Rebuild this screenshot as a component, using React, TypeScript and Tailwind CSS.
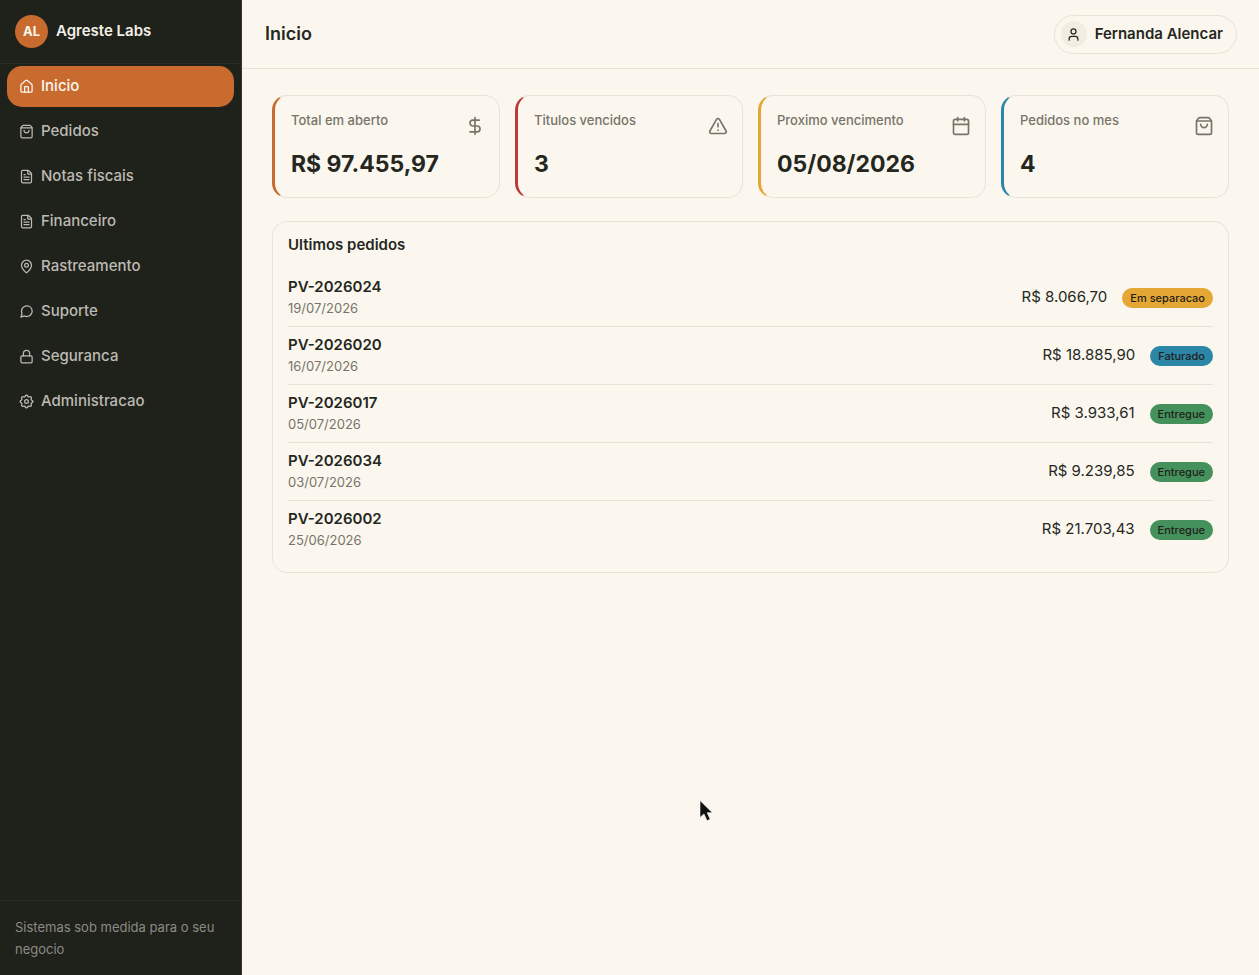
import type { ComponentType } from "react";
import {
  Calendar,
  DollarSign,
  FileText,
  House,
  Lock,
  MapPin,
  ShoppingBag,
  TriangleAlert,
  User,
} from "lucide-react";

type IconProps = { className?: string };
type NavItem = { label: string; icon: ComponentType<IconProps> };

function ChatIcon({ className }: IconProps) {
  return (
    <svg
      className={className}
      viewBox="0 0 24 24"
      fill="none"
      stroke="currentColor"
      strokeWidth="2"
      strokeLinecap="round"
      strokeLinejoin="round"
      aria-hidden="true"
    >
      <path d="M21 11.5a8.4 8.4 0 0 1-.9 3.8 8.5 8.5 0 0 1-7.6 4.7 8.4 8.4 0 0 1-3.8-.9L3 21l1.9-5.7a8.4 8.4 0 0 1-.9-3.8 8.5 8.5 0 0 1 4.7-7.6 8.4 8.4 0 0 1 3.8-.9h.5a8.5 8.5 0 0 1 8 8v.5z" />
    </svg>
  );
}

function GearIcon({ className }: IconProps) {
  return (
    <svg
      className={className}
      viewBox="1.5 1.5 21 21"
      fill="none"
      stroke="currentColor"
      strokeWidth="1.8"
      strokeLinecap="round"
      strokeLinejoin="round"
      aria-hidden="true"
    >
      <path d="M10.325 4.317c.426-1.756 2.924-1.756 3.35 0a1.724 1.724 0 0 0 2.573 1.066c1.543-.94 3.31.826 2.37 2.37a1.724 1.724 0 0 0 1.065 2.572c1.756.426 1.756 2.924 0 3.35a1.724 1.724 0 0 0-1.066 2.573c.94 1.543-.826 3.31-2.37 2.37a1.724 1.724 0 0 0-2.572 1.065c-.426 1.756-2.924 1.756-3.35 0a1.724 1.724 0 0 0-2.573-1.066c-1.543.94-3.31-.826-2.37-2.37a1.724 1.724 0 0 0-1.065-2.572c-1.756-.426-1.756-2.924 0-3.35a1.724 1.724 0 0 0 1.066-2.573c-.94-1.543.826-3.31 2.37-2.37 1 .608 2.296.07 2.572-1.065z" />
      <circle cx="12" cy="12" r="2.6" />
    </svg>
  );
}

const navItems: NavItem[] = [
  { label: "Inicio", icon: House },
  { label: "Pedidos", icon: ShoppingBag },
  { label: "Notas fiscais", icon: FileText },
  { label: "Financeiro", icon: FileText },
  { label: "Rastreamento", icon: MapPin },
  { label: "Suporte", icon: ChatIcon },
  { label: "Seguranca", icon: Lock },
  { label: "Administracao", icon: GearIcon },
];

const stats = [
  { label: "Total em aberto", value: "R$ 97.455,97", icon: DollarSign, accent: "border-l-[#c96a2e]" },
  { label: "Titulos vencidos", value: "3", icon: TriangleAlert, accent: "border-l-[#b93a3a]" },
  { label: "Proximo vencimento", value: "05/08/2026", icon: Calendar, accent: "border-l-[#e5a733]" },
  { label: "Pedidos no mes", value: "4", icon: ShoppingBag, accent: "border-l-[#2b86a8]" },
];

const statusColors: Record<string, string> = {
  "Em separacao": "bg-[#e5a733]",
  Faturado: "bg-[#2b86a8]",
  Entregue: "bg-[#45915b]",
};

const orders = [
  { id: "PV-2026024", date: "19/07/2026", total: "R$ 8.066,70", status: "Em separacao" },
  { id: "PV-2026020", date: "16/07/2026", total: "R$ 18.885,90", status: "Faturado" },
  { id: "PV-2026017", date: "05/07/2026", total: "R$ 3.933,61", status: "Entregue" },
  { id: "PV-2026034", date: "03/07/2026", total: "R$ 9.239,85", status: "Entregue" },
  { id: "PV-2026002", date: "25/06/2026", total: "R$ 21.703,43", status: "Entregue" },
];

function Sidebar() {
  return (
    <aside className="flex w-[242px] shrink-0 flex-col border-r border-[#37352d] bg-[#1f211b]">
      <div className="flex h-16 items-center gap-2 border-b border-[#2a2c26] px-[15px]">
        <span className="flex size-[33px] items-center justify-center rounded-full bg-[#c96a2e] text-[13px] font-bold text-[#faf6ee]">
          AL
        </span>
        <span className="text-[15px] font-semibold text-[#f3efe6]">Agreste Labs</span>
      </div>

      <nav className="flex flex-1 flex-col gap-1 px-[7px] pt-0.5">
        {navItems.map(({ label, icon: Icon }, i) => (
          <a
            key={label}
            href="#"
            aria-current={i === 0 ? "page" : undefined}
            className={
              i === 0
                ? "flex h-[41px] items-center gap-[7px] rounded-[15px] bg-[#c96a2e] px-3 text-[15px] font-medium text-[#faf6ee]"
                : "flex h-[41px] items-center gap-[7px] rounded-[15px] px-3 text-[15px] font-medium text-[#bcbab2]"
            }
          >
            <Icon className="size-[15px]" />
            {label}
          </a>
        ))}
      </nav>

      <p className="border-t border-[#2a2c26] p-[15px] text-[13px] leading-[22px] text-[#8c8b84]">
        Sistemas sob medida para o seu negocio
      </p>
    </aside>
  );
}

function Header() {
  return (
    <header className="flex h-[69px] items-center justify-between border-b border-[#e8e3d6] pr-[22px] pl-[23px]">
      <h1 className="text-lg font-semibold">Inicio</h1>
      <button
        type="button"
        className="flex h-[39px] items-center gap-2 rounded-full border border-[#e8e3d6] pr-[13px] pl-1.5 text-[15px] font-semibold"
      >
        <span className="flex size-[26px] items-center justify-center rounded-full bg-[#f2ede1]">
          <User className="size-[15px]" />
        </span>
        Fernanda Alencar
      </button>
    </header>
  );
}

function Stats() {
  return (
    <section className="grid grid-cols-4 gap-[15px]">
      {stats.map(({ label, value, icon: Icon, accent }) => (
        <div
          key={label}
          className={`flex h-[103px] justify-between rounded-[15px] border border-l-[3px] border-[#e8e3d6] pt-3.5 pr-3.5 pl-4 ${accent}`}
        >
          <div>
            <p className="text-[13px] leading-5 font-medium text-[#77746a]">{label}</p>
            <p className="mt-[18px] text-[23px] leading-8 font-bold">{value}</p>
          </div>
          <Icon className="mt-1.5 size-5 text-[#77746a]" />
        </div>
      ))}
    </section>
  );
}

function LatestOrders() {
  return (
    <section className="rounded-[15px] border border-[#e8e3d6] px-[15px] pt-[11px] pb-3.5">
      <h2 className="text-[15px] leading-6 font-semibold">Ultimos pedidos</h2>
      <ul className="mt-3 divide-y divide-[#e8e3d6]">
        {orders.map(({ id, date, total, status }) => (
          <li key={id} className="flex items-center justify-between py-[7px]">
            <div>
              <p className="text-[15px] leading-[22px] font-semibold">{id}</p>
              <p className="text-[13px] leading-[21px] text-[#77746a]">{date}</p>
            </div>
            <div className="flex items-center gap-[15px]">
              <span className="text-[15px]">{total}</span>
              <span
                className={`rounded-full px-2 text-[11px] leading-5 font-medium text-[#1f211b] ${statusColors[status]}`}
              >
                {status}
              </span>
            </div>
          </li>
        ))}
      </ul>
    </section>
  );
}

function Cursor() {
  return (
    <svg
      className="pointer-events-none fixed top-[82%] left-[55.5%]"
      width="16"
      height="22"
      viewBox="0 0 16 22"
      aria-hidden="true"
    >
      <path d="M1 0.5v17l4-3.6 3 6.8 3.2-1.4-3-6.6h5.2z" fill="#111" stroke="#fff" strokeWidth="0.6" />
    </svg>
  );
}

export default function App() {
  return (
    <div className="flex min-h-screen bg-[#fbf7ee] font-[Inter,sans-serif] text-[#25271f]">
      <Sidebar />
      <div className="flex-1">
        <Header />
        <main className="flex flex-col gap-[23px] px-[30px] pt-[26px]">
          <Stats />
          <LatestOrders />
        </main>
      </div>
      <Cursor />
    </div>
  );
}
